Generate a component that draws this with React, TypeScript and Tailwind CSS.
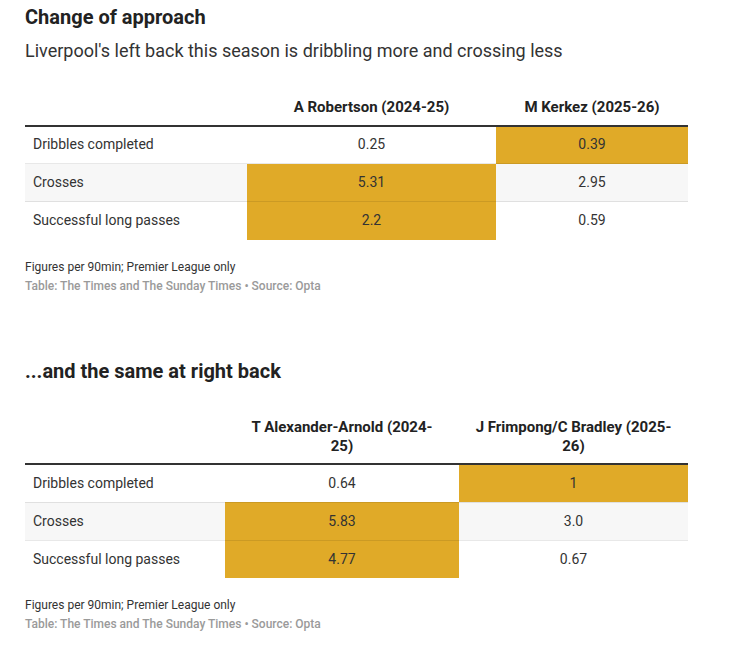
const gold = "bg-[#e0aa28]";

type Row = { label: string; a: string; b: string; hiA?: boolean; hiB?: boolean };

const leftBack: Row[] = [
  { label: "Dribbles completed", a: "0.25", b: "0.39", hiB: true },
  { label: "Crosses", a: "5.31", b: "2.95", hiA: true },
  { label: "Successful long passes", a: "2.2", b: "0.59", hiA: true },
];

const rightBack: Row[] = [
  { label: "Dribbles completed", a: "0.64", b: "1", hiB: true },
  { label: "Crosses", a: "5.83", b: "3.0", hiA: true },
  { label: "Successful long passes", a: "4.77", b: "0.67", hiA: true },
];

function StatTable({
  rows,
  headA,
  headB,
  widths,
  headMax,
}: {
  rows: Row[];
  headA: string;
  headB: string;
  widths: [string, string, string];
  headMax: [string, string];
}) {
  return (
    <table className="w-[663px] table-fixed border-collapse text-[14px] leading-[19px]">
      <colgroup>
        <col className={widths[0]} />
        <col className={widths[1]} />
        <col className={widths[2]} />
      </colgroup>
      <thead>
        <tr className="border-b-2 border-[#333]">
          <th className="pt-[11px] pb-[7.5px]" />
          <th className="pt-[11px] pb-[7.5px] text-center align-bottom text-[15px] font-bold text-[#222]">
            <div className={`mx-auto ${headMax[0]}`}>{headA}</div>
          </th>
          <th className="pt-[11px] pb-[7.5px] text-center align-bottom text-[15px] font-bold text-[#222]">
            <div className={`mx-auto ${headMax[1]}`}>{headB}</div>
          </th>
        </tr>
      </thead>
      <tbody className="text-[#333]">
        {rows.map((r, i) => (
          <tr
            key={r.label}
            className={`h-[38px] ${i < rows.length - 1 ? "border-b border-black/[0.09]" : ""} ${
              i === 1 ? "bg-[#f7f7f7]" : "bg-white"
            }`}
          >
            <td className="px-2 text-left">{r.label}</td>
            <td className={`text-center ${r.hiA ? gold : ""}`}>{r.a}</td>
            <td className={`text-center ${r.hiB ? gold : ""}`}>{r.b}</td>
          </tr>
        ))}
      </tbody>
    </table>
  );
}

function Notes() {
  return (
    <div className="mt-[18px] text-[12px] leading-[19px]">
      <p className="text-[#333]">Figures per 90min; Premier League only</p>
      <p className="font-medium text-[#9a9a9a]">Table: The Times and The Sunday Times • Source: Opta</p>
    </div>
  );
}

export default function App() {
  return (
    <div className="min-h-[645px] w-[733px] bg-white pl-[25px] pt-[3px] font-['Roboto','Liberation_Sans',sans-serif]">
      <h1 className="text-[20px] font-bold leading-[28px] text-[#222]">Change of approach</h1>
      <p className="mt-[8px] text-[18px] leading-[24px] text-[#333]">
        Liverpool's left back this season is dribbling more and crossing less
      </p>
      <div className="mt-[24px]">
        <StatTable
          rows={leftBack}
          headA="A Robertson (2024-25)"
          headB="M Kerkez (2025-26)"
          widths={["w-[222px]", "w-[249px]", "w-[192px]"]}
          headMax={["max-w-none", "max-w-none"]}
        />
      </div>
      <Notes />

      <h2 className="mt-[61px] text-[20px] font-bold leading-[28px] text-[#222]">...and the same at right back</h2>
      <div className="mt-[22px]">
        <StatTable
          rows={rightBack}
          headA="T Alexander-Arnold (2024-25)"
          headB="J Frimpong/C Bradley (2025-26)"
          widths={["w-[200px]", "w-[234px]", "w-[229px]"]}
          headMax={["max-w-[195px]", "max-w-[210px]"]}
        />
      </div>
      <Notes />
    </div>
  );
}
